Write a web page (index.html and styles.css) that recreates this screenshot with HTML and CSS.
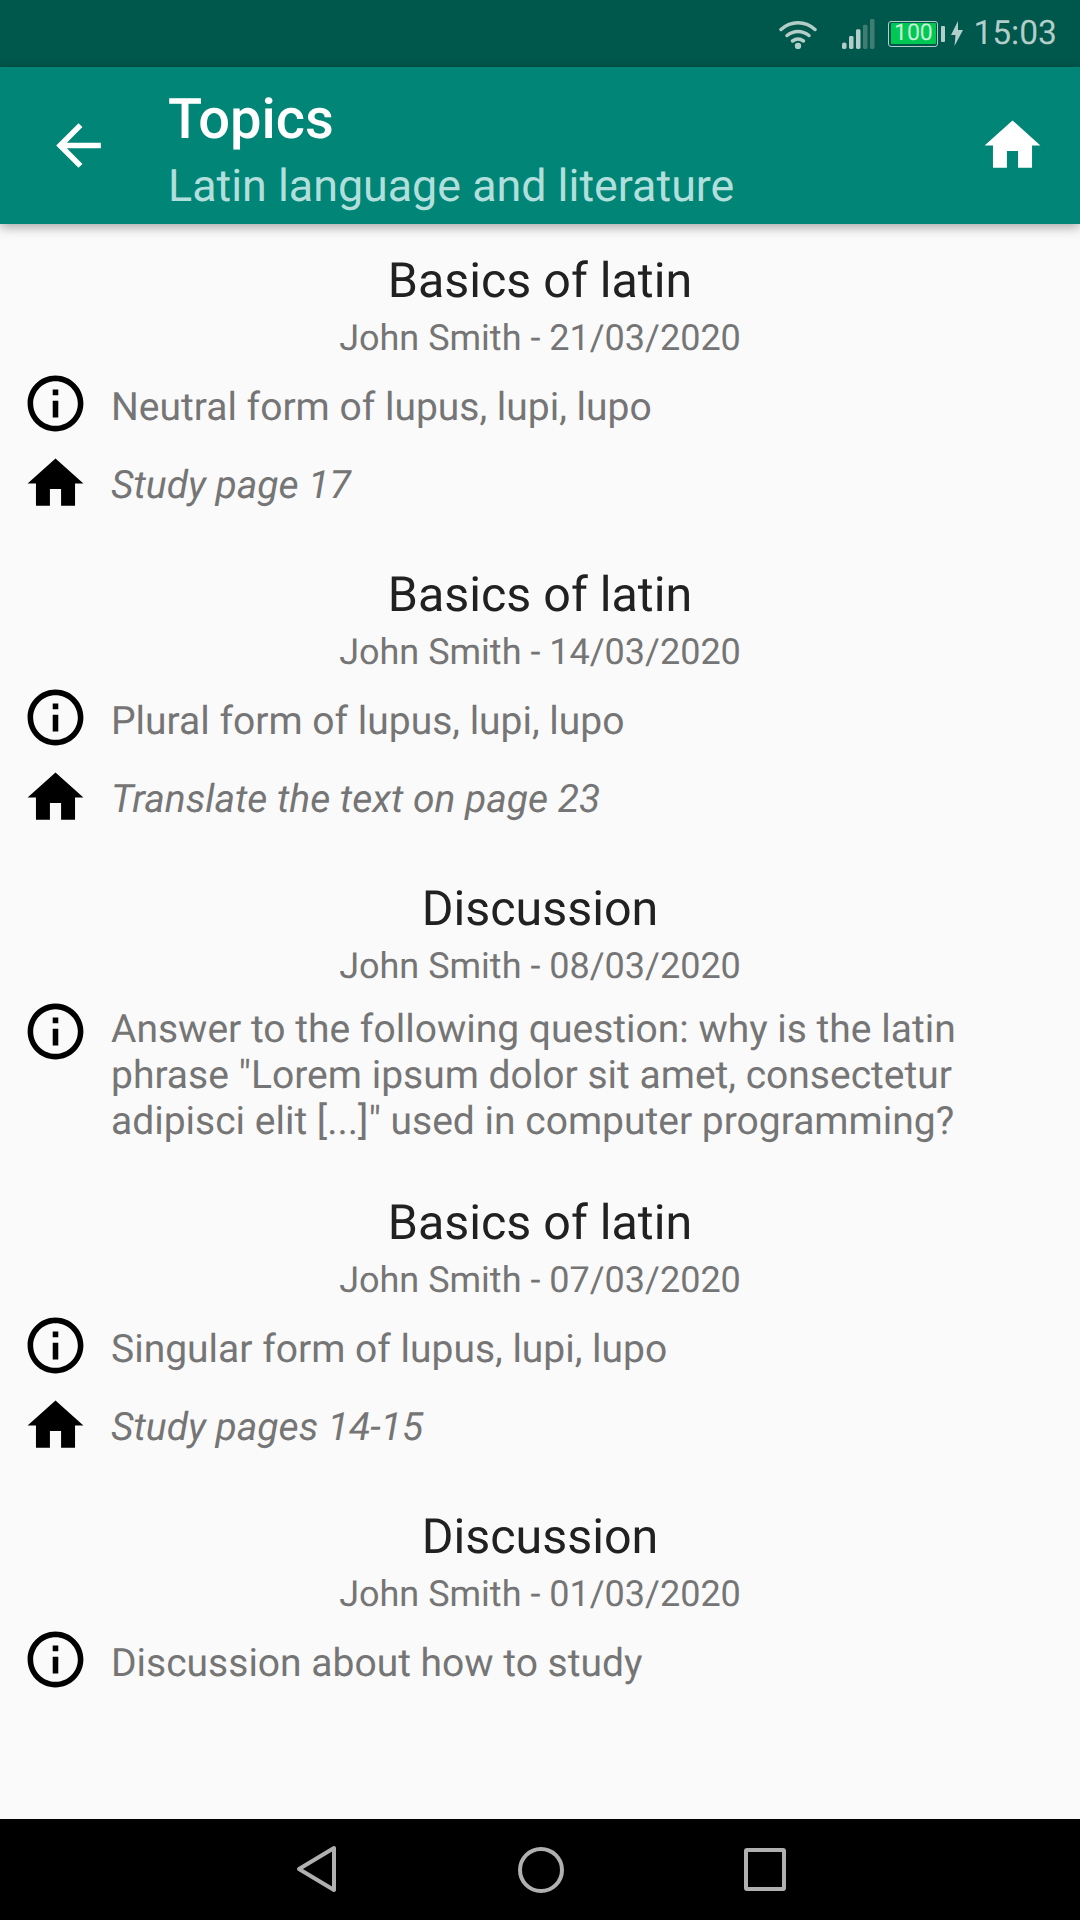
FILE: index.html
```html
<!DOCTYPE html>
<html lang="en">
<head>
    <meta charset="UTF-8">
    <meta name="viewport" content="width=device-width, initial-scale=1.0">
    <title>Topics</title>
    <link rel="stylesheet" href="styles.css">
</head>
<body>
    <svg class="icon-defs" width="0" height="0">
        <symbol id="ic-home" viewBox="0 0 24 24"><path d="M10 20v-6h4v6h5v-8h3L12 3 2 12h3v8z"/></symbol>
        <symbol id="ic-info" viewBox="0 0 24 24"><path d="M11 7h2v2h-2zm0 4h2v6h-2zm1-9C6.48 2 2 6.48 2 12s4.48 10 10 10 10-4.48 10-10S17.52 2 12 2zm0 18c-4.41 0-8-3.59-8-8s3.59-8 8-8 8 3.59 8 8-3.59 8-8 8z"/></symbol>
    </svg>
    <div class="phone">
        <div class="status-bar">
            <svg class="wifi" viewBox="0 0 38 30" width="38" height="30">
                <path d="M2 10.5C12 1.500 26 1.500 36 10.500" class="wifi-arc"/>
                <path d="M8 16.500C14.500 11 23.500 11 30 16.500" class="wifi-arc"/>
                <path d="M13.500 22C17 19.500 21 19.500 24.500 22" class="wifi-arc"/>
                <circle cx="19" cy="27" r="3.200" class="wifi-dot"/>
            </svg>
            <svg class="signal" viewBox="0 0 34 32" width="34" height="30" preserveAspectRatio="none">
                <rect x="1" y="25" width="4.500" height="7" rx="2" class="bar-on"/>
                <rect x="8" y="18" width="4.500" height="14" rx="1.500" class="bar-on"/>
                <rect x="15" y="11" width="4.500" height="21" rx="1.500" class="bar-on"/>
                <rect x="22" y="6" width="4.500" height="26" rx="1.500" class="bar-off"/>
                <rect x="29" y="0" width="4.500" height="32" rx="1.500" class="bar-off"/>
            </svg>
            <div class="battery"><span class="battery-level">100</span></div>
            <div class="battery-nub"></div>
            <svg class="bolt" viewBox="0 0 12 25" width="12" height="25"><path d="M7 0 0 14h4.500L3.500 25 12 9H7z"/></svg>
            <span class="clock">15:03</span>
        </div>

        <header class="app-bar">
            <svg class="back" viewBox="0 0 24 24"><path d="M20 11H7.830l5.590-5.590L12 4l-8 8 8 8 1.410-1.410L7.830 13H20v-2z"/></svg>
            <div class="app-bar-titles">
                <h1>Topics</h1>
                <p>Latin language and literature</p>
            </div>
            <svg class="home-btn"><use href="#ic-home"/></svg>
        </header>

        <main class="list">
            <section class="topic">
                <h2>Basics of latin</h2>
                <div class="byline">John Smith - 21/03/2020</div>
                <div class="row">
                    <svg class="icon"><use href="#ic-info"/></svg>
                    <p class="row-text">Neutral form of lupus, lupi, lupo</p>
                </div>
                <div class="row">
                    <svg class="icon"><use href="#ic-home"/></svg>
                    <p class="row-text homework">Study page 17</p>
                </div>
            </section>
            <section class="topic">
                <h2>Basics of latin</h2>
                <div class="byline">John Smith - 14/03/2020</div>
                <div class="row">
                    <svg class="icon"><use href="#ic-info"/></svg>
                    <p class="row-text">Plural form of lupus, lupi, lupo</p>
                </div>
                <div class="row">
                    <svg class="icon"><use href="#ic-home"/></svg>
                    <p class="row-text homework">Translate the text on page 23</p>
                </div>
            </section>
            <section class="topic">
                <h2>Discussion</h2>
                <div class="byline">John Smith - 08/03/2020</div>
                <div class="row">
                    <svg class="icon"><use href="#ic-info"/></svg>
                    <p class="row-text multiline">Answer to the following question: why is the latin phrase "Lorem ipsum dolor sit amet, consectetur adipisci elit [...]" used in computer programming?</p>
                </div>
            </section>
            <section class="topic">
                <h2>Basics of latin</h2>
                <div class="byline">John Smith - 07/03/2020</div>
                <div class="row">
                    <svg class="icon"><use href="#ic-info"/></svg>
                    <p class="row-text">Singular form of lupus, lupi, lupo</p>
                </div>
                <div class="row">
                    <svg class="icon"><use href="#ic-home"/></svg>
                    <p class="row-text homework">Study pages 14-15</p>
                </div>
            </section>
            <section class="topic">
                <h2>Discussion</h2>
                <div class="byline">John Smith - 01/03/2020</div>
                <div class="row">
                    <svg class="icon"><use href="#ic-info"/></svg>
                    <p class="row-text">Discussion about how to study</p>
                </div>
            </section>
        </main>

        <nav class="nav-bar">
            <svg class="nav-back" viewBox="0 0 42 48" width="42" height="48"><path d="M38 3 3 24l35 21z"/></svg>
            <div class="nav-home"></div>
            <div class="nav-recent"></div>
        </nav>
    </div>
</body>
</html>
```

FILE: styles.css
```css
* {
    box-sizing: border-box;
}
body {
    margin: 0;
    font-family: Roboto, "Liberation Sans", sans-serif;
    text-rendering: geometricPrecision;
    background-color: #fafafa;
}
.icon-defs {
    position: absolute;
}
.phone {
    width: 1080px;
    height: 1920px;
    display: flex;
    flex-direction: column;
    overflow: hidden;
}

/* status bar */
.status-bar {
    height: 67px;
    flex: none;
    background-color: #00574b;
    display: flex;
    align-items: center;
    padding-right: 23px;
    justify-content: flex-end;
}
.wifi {
    margin-right: 24px;
}
.wifi-arc {
    fill: none;
    stroke: #b3cdc9;
    stroke-width: 3.500;
    stroke-linecap: round;
}
.wifi-dot {
    fill: #b3cdc9;
}
.signal {
    margin-right: 13px;
}
.bar-on {
    fill: #b3cdc9;
}
.bar-off {
    fill: #3f7d73;
}
.battery {
    width: 50px;
    height: 26px;
    border: 1.500px solid #b3cdc9;
    border-radius: 3px;
    padding: 1.500px;
    display: flex;
}
.battery-level {
    flex: 1;
    background-color: #00c853;
    color: #c8f0d8;
    font-size: 23px;
    line-height: 20px;
    text-align: center;
    border-radius: 1px;
}
.battery-nub {
    width: 4px;
    height: 16px;
    margin-left: 3px;
    background-color: #b3cdc9;
    border-radius: 1px;
}
.bolt {
    margin-left: 6px;
    fill: #b3cdc9;
}
.clock {
    margin-left: 10px;
    font-size: 33.600px;
    color: #b3cdc9;
}

/* toolbar */
.app-bar {
    height: 157px;
    flex: none;
    background-color: #008577;
    display: flex;
    align-items: center;
    padding-left: 45px;
    padding-right: 34px;
    box-shadow: 0 3px 11px rgba(0, 0, 0, 0.35);
    position: relative;
}
.back {
    width: 67px;
    height: 67px;
    fill: #fff;
    margin-right: 56px;
}
.app-bar-titles {
    flex: 1;
    padding-top: 7px;
}
.app-bar h1 {
    margin: 0;
    font-size: 56px;
    font-weight: 500;
    line-height: 66px;
    color: #fff;
}
.app-bar p {
    margin: 7px 0 0;
    font-size: 44.800px;
    line-height: 53px;
    color: #b2dfdb;
}
.home-btn {
    width: 67px;
    height: 67px;
    fill: #fff;
}

/* topics */
.list {
    flex: 1;
}
.topic {
    height: 314px;
    padding: 27px 22px 0;
}
.topic h2 {
    margin: 0;
    text-align: center;
    font-size: 48.400px;
    font-weight: 400;
    line-height: 59px;
    color: #212121;
}
.byline {
    text-align: center;
    font-size: 36px;
    line-height: 46px;
    color: #757575;
    margin-top: 5px;
    margin-bottom: 9px;
}
.row {
    display: flex;
    align-items: flex-start;
    margin-bottom: 13px;
}
.icon {
    width: 67px;
    height: 67px;
    flex: none;
    fill: #000;
}
.row-text {
    margin: 14px 0 0 22px;
    font-size: 39px;
    line-height: 46px;
    color: #757575;
}
.multiline {
    margin-top: 8px;
}
.homework {
    font-style: italic;
    margin-top: 12px;
}

/* navigation bar */
.nav-bar {
    height: 101px;
    flex: none;
    background-color: #000;
    position: relative;
}
.nav-back {
    position: absolute;
    left: 296px;
    top: 26px;
    fill: none;
    stroke: #b0b0b0;
    stroke-width: 4;
    stroke-linejoin: round;
}
.nav-home {
    position: absolute;
    left: 518px;
    top: 28px;
    width: 46px;
    height: 46px;
    border: 4px solid #b0b0b0;
    border-radius: 50%;
}
.nav-recent {
    position: absolute;
    left: 744px;
    top: 29px;
    width: 42px;
    height: 43px;
    border: 4px solid #b0b0b0;
    border-radius: 3px;
}
```
